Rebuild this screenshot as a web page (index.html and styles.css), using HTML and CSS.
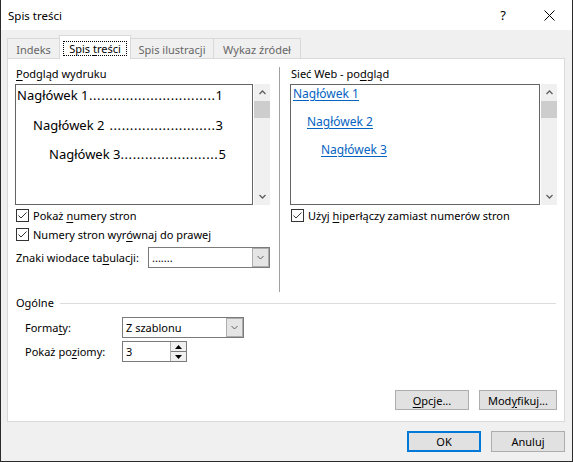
FILE: index.html
```html
<!DOCTYPE html>
<html lang="pl">
  <head>
    <meta charset="utf-8" />
    <title>Spis treści</title>
    <link rel="stylesheet" href="styles.css">
  </head>
  <body>
    <div class="dialog">
      <div class="titlebar">
        <span class="title">Spis treści</span>
        <div class="caption">
          <span class="caption-btn caption-help">?</span>
          <span class="caption-btn">
            <svg width="11" height="11" viewBox="0 0 11 11"><path d="M0.5 0.5L10.5 10.5M10.5 0.5L0.5 10.5" stroke="#000" stroke-width="1" fill="none"/></svg>
          </span>
        </div>
      </div>

      <div class="client">
        <div class="tabs">
          <div class="tab tab-indeks">Indeks</div>
          <div class="tab tab-active"><span class="tab-focus">Spis <u>t</u>reści</span></div>
          <div class="tab tab-ilustracje">Spis ilustracji</div>
          <div class="tab tab-zrodla">Wykaz źródeł</div>
        </div>

        <div class="panel">
          <div class="columns">
            <!-- podgląd wydruku -->
            <div class="col col-left">
              <div class="label"><u>P</u>odgląd wydruku</div>
              <div class="preview">
                <div class="preview-box print">
                  <div class="toc-line"><span>Nagłówek 1</span><span class="toc-dots">...............................</span><span>1</span></div>
                  <div class="toc-line lvl2"><span>Nagłówek 2</span><span class="toc-dots">..........................</span><span>3</span></div>
                  <div class="toc-line lvl3"><span>Nagłówek 3</span><span class="toc-dots">........................</span><span>5</span></div>
                </div>
                <div class="scrollbar">
                  <span class="scroll-arrow"><svg width="7" height="5" viewBox="0 0 7 5"><path d="M0.5 4L3.5 1L6.5 4" stroke="#606060" stroke-width="1.3" fill="none"/></svg></span>
                  <span class="scroll-thumb"></span>
                  <span class="scroll-space"></span>
                  <span class="scroll-arrow"><svg width="7" height="5" viewBox="0 0 7 5"><path d="M0.5 1L3.5 4L6.5 1" stroke="#606060" stroke-width="1.3" fill="none"/></svg></span>
                </div>
              </div>
              <div class="check check-first">
                <span class="box"><svg width="11" height="11" viewBox="0 0 11 11"><path d="M1.5 5.5L4 8L9.5 2.5" stroke="#333" stroke-width="1" fill="none"/></svg></span>
                <span>Pokaż <u>n</u>umery stron</span>
              </div>
              <div class="check">
                <span class="box"><svg width="11" height="11" viewBox="0 0 11 11"><path d="M1.5 5.5L4 8L9.5 2.5" stroke="#333" stroke-width="1" fill="none"/></svg></span>
                <span>Numery stron wyr<u>ó</u>wnaj do prawej</span>
              </div>
              <div class="field-row">
                <span>Znaki wiodace ta<u>b</u>ulacji:</span>
                <div class="combo">
                  <span class="combo-value">.......</span>
                  <span class="combo-btn"><svg width="7" height="5" viewBox="0 0 7 5"><path d="M0.5 1L3.5 4L6.5 1" stroke="#606060" stroke-width="1" fill="none"/></svg></span>
                </div>
              </div>
            </div>

            <div class="divider"></div>

            <!-- podgląd sieci web -->
            <div class="col col-right">
              <div class="label">Sieć Web - po<u>d</u>gląd</div>
              <div class="preview">
                <div class="preview-box web">
                  <div class="web-line"><span class="link">Nagłówek 1</span></div>
                  <div class="web-line lvl2"><span class="link">Nagłówek 2</span></div>
                  <div class="web-line lvl3"><span class="link">Nagłówek 3</span></div>
                </div>
                <div class="scrollbar">
                  <span class="scroll-arrow"><svg width="7" height="5" viewBox="0 0 7 5"><path d="M0.5 4L3.5 1L6.5 4" stroke="#606060" stroke-width="1.3" fill="none"/></svg></span>
                  <span class="scroll-thumb"></span>
                  <span class="scroll-space"></span>
                  <span class="scroll-arrow"><svg width="7" height="5" viewBox="0 0 7 5"><path d="M0.5 1L3.5 4L6.5 1" stroke="#606060" stroke-width="1.3" fill="none"/></svg></span>
                </div>
              </div>
              <div class="check check-first">
                <span class="box"><svg width="11" height="11" viewBox="0 0 11 11"><path d="M1.5 5.5L4 8L9.5 2.5" stroke="#333" stroke-width="1" fill="none"/></svg></span>
                <span>Użyj <u>h</u>iperłączy zamiast numerów stron</span>
              </div>
            </div>
          </div>

          <!-- ogólne -->
          <div class="group-head">Ogólne</div>
          <div class="group-row group-row-first">
            <span class="group-label">Forma<u>t</u>y:</span>
            <div class="combo">
              <span class="combo-value">Z szablonu</span>
              <span class="combo-btn"><svg width="7" height="5" viewBox="0 0 7 5"><path d="M0.5 1L3.5 4L6.5 1" stroke="#606060" stroke-width="1" fill="none"/></svg></span>
            </div>
          </div>
          <div class="group-row">
            <span class="group-label">Pokaż po<u>z</u>iomy:</span>
            <div class="spin">
              <span class="spin-value">3</span>
              <span class="spin-btns">
                <span class="spin-btn"><svg width="7" height="4" viewBox="0 0 7 4"><path d="M0 4L3.5 0L7 4Z" fill="#000"/></svg></span>
                <span class="spin-btn spin-down"><svg width="7" height="4" viewBox="0 0 7 4"><path d="M0 0L3.5 4L7 0Z" fill="#000"/></svg></span>
              </span>
            </div>
          </div>

          <div class="panel-buttons">
            <span class="btn btn-opcje"><span><u>O</u>pcje...</span></span>
            <span class="btn btn-modyfikuj"><span>Mod<u>y</u>fikuj...</span></span>
          </div>
        </div>

        <div class="dialog-buttons">
          <span class="btn btn-default">OK</span>
          <span class="btn">Anuluj</span>
        </div>
      </div>
    </div>
  </body>
</html>
```

FILE: styles.css
```css
* {
  box-sizing: border-box;
}

html,
body {
  margin: 0;
}

body {
  font-family: "Segoe UI", "Noto Sans", sans-serif;
  font-size: 11px;
  color: #000;
  background: #fff;
}

u {
  text-decoration-thickness: 1px;
  text-underline-offset: 2px;
}

.dialog {
  width: 573px;
  height: 462px;
  display: flex;
  flex-direction: column;
  border: 1px solid #2b2b2b;
  border-top: none;
  background: #f0f0f0;
}

/* title bar */
.titlebar {
  height: 30px;
  flex: none;
  display: flex;
  align-items: center;
  padding-left: 7px;
  background: #fff;
}

.title {
  font-size: 11.5px;
}

.caption {
  margin-left: auto;
  display: flex;
  height: 100%;
}

.caption-btn {
  width: 46px;
  display: flex;
  align-items: center;
  justify-content: center;
}

.caption-help {
  font-size: 13px;
}

/* client area */
.client {
  flex: 1;
  display: flex;
  flex-direction: column;
  padding: 5px 7px 0 6px;
}

.tabs {
  display: flex;
  align-items: flex-end;
  height: 23px;
  position: relative;
  z-index: 1;
}

.tab {
  height: 20px;
  margin-left: -1px;
  padding-top: 2px;
  display: flex;
  align-items: center;
  justify-content: center;
  border: 1px solid #d9d9d9;
  border-bottom: none;
  background: #f0f0f0;
  color: #666;
  white-space: nowrap;
}

.tab-indeks {
  margin-left: 0;
  width: 53px;
}

.tab-active {
  width: 72px;
  height: 24px;
  margin-bottom: -1px;
  padding-top: 1px;
  background: #fff;
  color: #000;
}

.tab-focus {
  border: 1px dotted #000;
  padding: 0 5px;
  line-height: 13px;
}

.tab-ilustracje {
  width: 84px;
}

.tab-zrodla {
  width: 88px;
}

.panel {
  height: 364px;
  flex: none;
  display: flex;
  flex-direction: column;
  padding: 7px 7px 11px 7px;
  border: 1px solid #d9d9d9;
  background: #fff;
}

.columns {
  display: flex;
}

.col-left {
  width: 255px;
  padding-bottom: 24px;
}

.col-right {
  width: 267px;
}

.divider {
  width: 1px;
  margin: 1px 10px 0 9px;
  background: #a0a0a0;
}

.label {
  line-height: 16px;
  padding-left: 1px;
  margin-bottom: 2px;
}

/* preview boxes */
.preview {
  display: flex;
  gap: 1px;
  height: 121px;
}

.preview-box {
  width: 238px;
  border: 1px solid #646464;
  background: #fff;
  overflow: hidden;
}

.col-right .preview-box {
  width: 250px;
}

.scrollbar {
  width: 16px;
  display: flex;
  flex-direction: column;
  background: #f0f0f0;
}

.scroll-arrow {
  height: 17px;
  display: flex;
  align-items: center;
  justify-content: center;
}

.scroll-thumb {
  height: 17px;
  background: #cdcdcd;
}

.scroll-space {
  flex: 1;
}

.print {
  padding-left: 1px;
  font-family: "Noto Sans", sans-serif;
  font-size: 13px;
}

.toc-line {
  display: flex;
  width: 206px;
  height: 20px;
  line-height: 20px;
  white-space: nowrap;
}

.toc-line + .toc-line {
  margin-top: 9.5px;
}

.toc-dots {
  flex: 1;
  text-align: right;
  letter-spacing: 0.6px;
}

.lvl2 {
  padding-left: 16px;
}

.lvl3 {
  padding-left: 32px;
}

.web {
  padding-left: 2px;
  font-family: "Noto Sans", sans-serif;
  font-size: 12px;
}

.web-line {
  height: 18px;
  line-height: 18px;
}

.web-line + .web-line {
  margin-top: 10px;
}

.web .lvl2 {
  padding-left: 14px;
}

.web .lvl3 {
  padding-left: 28px;
}

.link {
  color: #0563c1;
  text-decoration: underline;
  text-underline-offset: 2px;
}

/* checkboxes */
.check {
  display: flex;
  align-items: center;
  gap: 4px;
  height: 19px;
  padding-left: 1px;
}

.check-first {
  margin-top: 1px;
}

.box {
  width: 13px;
  height: 13px;
  flex: none;
  display: flex;
  align-items: center;
  justify-content: center;
  border: 1px solid #333;
  background: #fff;
}

.field-row {
  display: flex;
  align-items: center;
  margin-top: 3px;
  padding-left: 1px;
}

.field-row .combo {
  margin-left: auto;
}

/* combo and spin */
.combo {
  width: 122px;
  height: 21px;
  display: flex;
  border: 1px solid #7a7a7a;
  background: #fff;
}

.combo-value {
  flex: 1;
  padding-left: 3px;
  line-height: 19px;
}

.combo-btn {
  width: 17px;
  display: flex;
  align-items: center;
  justify-content: center;
  border: 1px solid #adadad;
  background: #e5e5e5;
}

.group-head {
  display: flex;
  align-items: center;
  margin-top: 3px;
  padding-left: 1px;
  line-height: 16px;
}

.group-head::after {
  content: "";
  flex: 1;
  height: 1px;
  margin: 1px 1px 0 6px;
  background: #dcdcdc;
}

.group-row {
  display: flex;
  align-items: center;
  margin-top: 3px;
  padding-left: 10px;
}

.group-row-first {
  margin-top: 6px;
}

.group-label {
  width: 97px;
}

.spin {
  width: 65px;
  height: 21px;
  display: flex;
  border: 1px solid #7a7a7a;
  background: #fff;
}

.spin-value {
  flex: 1;
  padding-left: 3px;
  line-height: 19px;
}

.spin-btns {
  width: 16px;
  display: flex;
  flex-direction: column;
  border-left: 1px solid #adadad;
}

.spin-btn {
  flex: 1;
  display: flex;
  align-items: center;
  justify-content: center;
  background: #f0f0f0;
}

.spin-down {
  border-top: 1px solid #7a7a7a;
}

/* buttons */
.btn {
  height: 20px;
  display: flex;
  align-items: center;
  justify-content: center;
  border: 1px solid #adadad;
  background: #e1e1e1;
}

.panel-buttons {
  margin-top: auto;
  display: flex;
  justify-content: flex-end;
  gap: 10px;
}

.btn-opcje {
  width: 74px;
}

.btn-modyfikuj {
  width: 78px;
}

.dialog-buttons {
  display: flex;
  justify-content: flex-end;
  gap: 10px;
  margin-top: 9px;
}

.dialog-buttons .btn {
  width: 74px;
  height: 21px;
}

.dialog-buttons .btn-default {
  border: 2px solid #0078d7;
}
```
